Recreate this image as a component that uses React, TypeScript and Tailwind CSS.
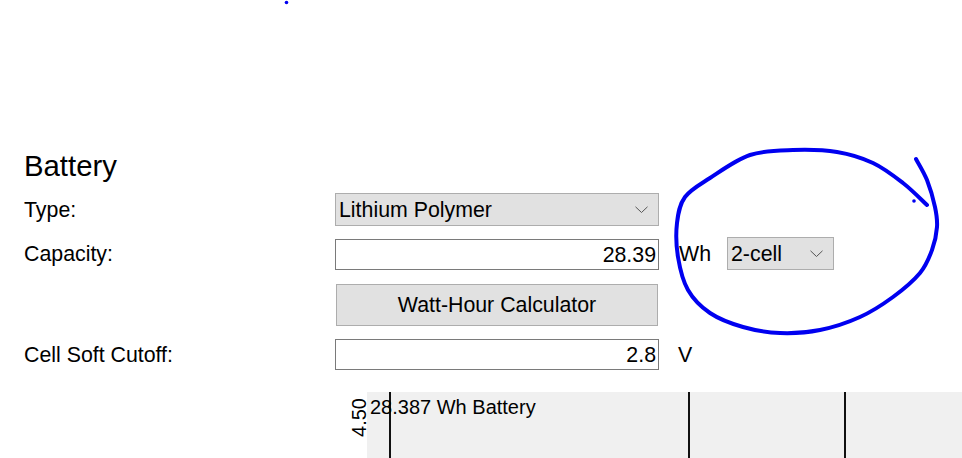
import type { ReactNode } from "react";

type Pt = [number, number];

// hand-drawn annotation, traced from the marked-up screenshot
const LOOP: Pt[] = [
  [916, 159], [927, 180], [935, 207], [937, 227], [932, 250], [920, 273],
  [893, 297], [860, 317], [820, 330], [780, 333], [743, 327], [710, 313],
  [688, 290], [678, 257], [677, 223], [685, 197], [710, 178], [750, 155],
  [793, 150], [837, 152], [873, 163], [903, 183], [927, 205],
];

function smoothPath(pts: Pt[]) {
  let d = `M${pts[0][0]} ${pts[0][1]}`;
  for (let i = 0; i < pts.length - 1; i++) {
    const p0 = pts[i - 1] ?? pts[i];
    const p1 = pts[i];
    const p2 = pts[i + 1];
    const p3 = pts[i + 2] ?? p2;
    const c1 = [p1[0] + (p2[0] - p0[0]) / 6, p1[1] + (p2[1] - p0[1]) / 6];
    const c2 = [p2[0] - (p3[0] - p1[0]) / 6, p2[1] - (p3[1] - p1[1]) / 6];
    d += ` C${c1[0]} ${c1[1]} ${c2[0]} ${c2[1]} ${p2[0]} ${p2[1]}`;
  }
  return d;
}

function Chevron() {
  return (
    <svg width="13" height="8" viewBox="0 0 13 8" className="shrink-0">
      <polyline points="0.5,0.8 6.5,6.5 12.5,0.8" fill="none" stroke="#555" strokeWidth="1" />
    </svg>
  );
}

function Select({ value, className }: { value: string; className?: string }) {
  return (
    <div
      className={`flex h-[33px] items-center justify-between border border-[#adadad] bg-[#e1e1e1] pl-[3px] pr-[10px] text-[21.33px] leading-none ${className ?? ""}`}
    >
      <span className="pt-[2px]">{value}</span>
      <Chevron />
    </div>
  );
}

function NumberField({ value }: { value: string }) {
  return (
    <div className="flex h-[31px] w-[324px] items-center justify-end border border-[#7a7a7a] bg-white pr-[2px] pt-[2px] text-[21.33px] leading-none">
      {value}
    </div>
  );
}

function Row({ label, children, className }: { label?: string; children: ReactNode; className?: string }) {
  return (
    <div className={`flex items-center ${className ?? ""}`}>
      <div className="w-[311px] shrink-0 pt-[2px] text-[21.33px] leading-none">{label}</div>
      {children}
    </div>
  );
}

export default function App() {
  return (
    <div className="relative h-[458px] w-[962px] overflow-hidden bg-white font-['Liberation_Sans',Arial,sans-serif] text-black">
      <div className="pl-[24px] pt-[149px]">
        <h2 className="text-[29.33px] leading-[33px]">Battery</h2>

        <Row label="Type:" className="mt-[11px] h-[33px]">
          <Select value="Lithium Polymer" className="w-[324px]" />
        </Row>

        <Row label="Capacity:" className="mt-[11px] h-[33px]">
          <div className="self-end">
            <NumberField value="28.39" />
          </div>
          <span className="ml-[20px] w-[48px] pt-[2px] text-[21.33px] leading-none">Wh</span>
          <Select value="2-cell" className="w-[107px]" />
        </Row>

        <Row className="mt-[14px] h-[42px]">
          <button className="ml-px h-[42px] w-[322px] border border-[#adadad] bg-[#e1e1e1] pt-[2px] text-[21.33px] leading-none">
            Watt-Hour Calculator
          </button>
        </Row>

        <Row label="Cell Soft Cutoff:" className="mt-[13px] h-[31px]">
          <NumberField value="2.8" />
          <span className="ml-[19px] pt-[2px] text-[21.33px] leading-none">V</span>
        </Row>

        <div className="mt-[22px] flex">
          <div className="w-[319px] shrink-0" />
          <div className="flex w-[24px] shrink-0 justify-end">
            <span className="-mr-[2px] mt-[6px] inline-block h-fit rotate-180 text-[20px] leading-[20px] [writing-mode:vertical-rl]">
              4.50
            </span>
          </div>
          <div className="relative h-[140px] flex-1 bg-[#f0f0f0]">
            <svg className="absolute inset-0 h-full w-full" aria-hidden>
              <line x1="23" y1="0" x2="23" y2="140" stroke="#111" strokeWidth="2" />
              <line x1="322" y1="0" x2="322" y2="140" stroke="#111" strokeWidth="2" />
              <line x1="478" y1="0" x2="478" y2="140" stroke="#111" strokeWidth="2" />
            </svg>
            <span className="absolute left-[3px] top-[5px] text-[20px] leading-[20px]">28.387 Wh Battery</span>
          </div>
        </div>
      </div>

      {/* blue pen markup */}
      <svg className="pointer-events-none absolute inset-0" width="962" height="458" viewBox="0 0 962 458" aria-hidden>
        <path d={smoothPath(LOOP)} fill="none" stroke="#0000f0" strokeWidth="4" strokeLinecap="round" strokeLinejoin="round" />
        <circle cx="914" cy="201" r="1.8" fill="#0000f0" />
        <circle cx="286.5" cy="2.5" r="1.8" fill="#0000f0" />
      </svg>
    </div>
  );
}
